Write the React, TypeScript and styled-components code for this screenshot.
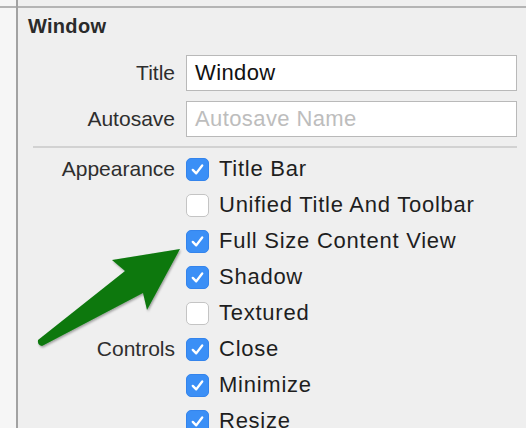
import React from 'react';
import styled, { createGlobalStyle } from 'styled-components';

const GlobalStyle = createGlobalStyle`
  html, body {
    margin: 0;
    padding: 0;
    background: #f6f6f6;
    font-family: "Liberation Sans", Arial, sans-serif;
    overflow: hidden;
  }
`;

const Page = styled.div`
  position: relative;
  display: flex;
  width: 526px;
  height: 428px;
  overflow: hidden;
`;

const Rule = styled.div`
  height: 2px;
  margin-top: 6px;
  background: #b4b4b4;
`;

const Gutter = styled.div`
  width: 16px;
  flex: none;
`;

const Inspector = styled.div`
  flex: 1;
  border-left: 2px solid #a2a2a2;
  background: #efefef;
`;

const Content = styled.div`
  padding: 6px 9px 0 0;
`;

const Header = styled.h2`
  margin: 0 0 17px 10px;
  font-size: 20px;
  line-height: 24px;
  font-weight: bold;
  letter-spacing: 0.3px;
  color: #2a2a2a;
`;

const Form = styled.div`
  display: grid;
  grid-template-columns: 157px 1fr;
  column-gap: 11px;
  row-gap: 10px;
  align-items: center;
`;

const Label = styled.div`
  text-align: right;
  font-size: 21px;
  color: #2e2e2e;
`;

const TextField = styled.div<{ $placeholder?: boolean }>`
  height: 36px;
  box-sizing: border-box;
  border: 1px solid #b9b9b9;
  background: #ffffff;
  padding: 0 8px;
  display: flex;
  align-items: center;
  font-size: 22px;
  letter-spacing: 0.4px;
  color: ${(p) => (p.$placeholder ? '#bdbdbd' : '#111111')};
`;

const Separator = styled.div`
  height: 2px;
  background: #d2d2d2;
  margin: 9px 0 3px 15px;
`;

const Checks = styled.div`
  display: grid;
  grid-template-columns: 157px 1fr;
  column-gap: 11px;
  grid-auto-rows: 36px;
  align-items: center;
`;

const CheckRow = styled.div`
  display: flex;
  align-items: center;
  gap: 10px;
  font-size: 22px;
  letter-spacing: 0.75px;
  color: #1e1e1e;
  white-space: nowrap;
`;

const Box = styled.span<{ $on: boolean }>`
  width: 23px;
  height: 23px;
  box-sizing: border-box;
  border-radius: 5px;
  flex: none;
  display: flex;
  align-items: center;
  justify-content: center;
  background: ${(p) => (p.$on ? '#3b8ff6' : '#ffffff')};
  border: ${(p) => (p.$on ? '1px solid #3484ec' : '1px solid #c4c4c4')};
`;

const Arrow = styled.svg`
  position: absolute;
  left: 0;
  top: 0;
  pointer-events: none;
`;

const Check: React.FC<{ on: boolean; text: string }> = ({ on, text }) => (
  <CheckRow>
    <Box $on={on}>
      {on && (
        <svg width="15" height="15" viewBox="0 0 14 14">
          <path d="M2.6 7.4 L5.8 10.6 L11.4 3.2" fill="none" stroke="#fff" strokeWidth="2.2" strokeLinecap="round" strokeLinejoin="round" />
        </svg>
      )}
    </Box>
    {text}
  </CheckRow>
);

const items: { group?: string; on: boolean; text: string }[] = [
  { group: 'Appearance', on: true, text: 'Title Bar' },
  { on: false, text: 'Unified Title And Toolbar' },
  { on: true, text: 'Full Size Content View' },
  { on: true, text: 'Shadow' },
  { on: false, text: 'Textured' },
  { group: 'Controls', on: true, text: 'Close' },
  { on: true, text: 'Minimize' },
  { on: true, text: 'Resize' },
];

export default function App() {
  return (
    <>
      <GlobalStyle />
      <Page>
        <Gutter>
          <Rule />
        </Gutter>
        <Inspector>
          <Rule />
          <Content>
            <Header>Window</Header>
            <Form>
              <Label>Title</Label>
              <TextField>Window</TextField>
              <Label>Autosave</Label>
              <TextField $placeholder>Autosave Name</TextField>
            </Form>
            <Separator />
            <Checks>
              {items.map((it, i) => (
                <React.Fragment key={i}>
                  <Label>{it.group ?? ''}</Label>
                  <Check on={it.on} text={it.text} />
                </React.Fragment>
              ))}
            </Checks>
          </Content>
        </Inspector>
        <Arrow width="526" height="428" viewBox="0 0 526 428">
          <defs>
            <filter id="sh" x="-20%" y="-20%" width="140%" height="140%">
              <feDropShadow dx="1" dy="1.5" stdDeviation="1.2" floodColor="#000" floodOpacity="0.35" />
            </filter>
          </defs>
          <path
            d="M180 249 L112 260 L125 271 L38 340 Q37 345 42 346 L143 293 L147 310 Z"
            fill="#0a780c"
            filter="url(#sh)"
          />
        </Arrow>
      </Page>
    </>
  );
}
